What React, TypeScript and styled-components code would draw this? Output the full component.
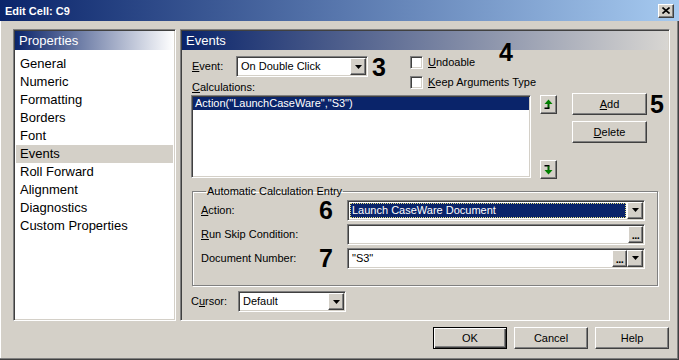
import React from 'react'
import styled, { createGlobalStyle } from 'styled-components'

const colors = {
  face: '#d4d0c8',
  shadow: '#808080',
  dark: '#404040',
  white: '#ffffff',
  navy: '#0a246a',
  text: '#000000',
}

const GlobalStyle = createGlobalStyle`
  html, body {
    margin: 0;
    padding: 0;
    background: ${colors.face};
  }
  body {
    font-family: 'Liberation Sans', Arial, sans-serif;
    font-size: 11px;
    color: ${colors.text};
  }
  * {
    box-sizing: border-box;
  }
`

const Window = styled.div`
  width: 679px;
  height: 360px;
  display: flex;
  flex-direction: column;
  background: ${colors.face};
  box-shadow: inset -1px -1px ${colors.dark}, inset -2px -2px ${colors.shadow},
    inset 1px 0 ${colors.white};
  overflow: hidden;
`

const TitleBar = styled.div`
  height: 21px;
  flex: none;
  display: flex;
  align-items: center;
  justify-content: space-between;
  padding: 0 5px;
  background: linear-gradient(to right, ${colors.navy}, #a6caf0);
`

const Title = styled.span`
  font-weight: bold;
  font-size: 11px;
  color: ${colors.white};
`

const raised = `
  background: ${colors.face};
  border: 1px solid;
  border-color: ${colors.white} ${colors.dark} ${colors.dark} ${colors.white};
  box-shadow: inset -1px -1px ${colors.shadow};
`

const sunken = `
  border: 1px solid;
  border-color: ${colors.shadow} ${colors.white} ${colors.white} ${colors.shadow};
  box-shadow: inset 1px 1px ${colors.dark}, inset -1px -1px ${colors.face};
  padding: 1px;
`

const CloseButton = styled.div`
  ${raised}
  width: 16px;
  height: 14px;
  display: flex;
  align-items: center;
  justify-content: center;
`

const Body = styled.div`
  flex: 1;
  display: flex;
  flex-direction: column;
  padding: 8px 9px 0 13px;
`

const MainRow = styled.div`
  display: flex;
  gap: 4px;
  height: 292px;
`

const Panel = styled.div<{ $width: number; $fill: string }>`
  ${sunken}
  width: ${(p) => p.$width}px;
  height: 100%;
  background: ${(p) => p.$fill};
  display: flex;
  flex-direction: column;
`

const PanelHeader = styled.div<{ $end: string }>`
  height: 19px;
  flex: none;
  line-height: 19px;
  padding-left: 4px;
  font-size: 13px;
  color: ${colors.white};
  background: linear-gradient(to right, ${colors.navy}, ${(p) => p.$end});
`

const NavList = styled.ul`
  list-style: none;
  margin: 5px 0 0;
  padding: 0;
`

const NavItem = styled.li<{ $active?: boolean }>`
  height: 18px;
  line-height: 18px;
  margin: 0 1px;
  padding-left: 4px;
  font-size: 13px;
  background: ${(p) => (p.$active ? colors.face : 'transparent')};
`

const Content = styled.div`
  position: relative;
  flex: 1;
  padding: 5px 0 0 9px;
`

const TopArea = styled.div`
  display: flex;
  height: 40px;
`

const TopLeft = styled.div`
  width: 219px;
`

const Row = styled.div`
  display: flex;
  align-items: center;
`

const EventRow = styled(Row)`
  margin-top: 1px;
  height: 21px;
`

const Label = styled.span<{ $width?: number }>`
  display: inline-block;
  width: ${(p) => (p.$width ? `${p.$width}px` : 'auto')};
  flex: none;
  line-height: 13px;
  white-space: nowrap;
`

const CalcLabel = styled.div`
  margin-top: 4px;
  padding-left: 1px;
  line-height: 13px;
`

const CheckColumn = styled.div`
  display: flex;
  flex-direction: column;
  gap: 7px;
  padding-top: 1px;
`

const CheckRow = styled.label`
  display: flex;
  align-items: center;
  gap: 5px;
  height: 13px;
  line-height: 13px;
`

const CheckBox = styled.span`
  ${sunken}
  width: 13px;
  height: 13px;
  background: ${colors.white};
`

const Marker = styled.span<{ $gap?: number }>`
  font-weight: bold;
  font-size: 25px;
  line-height: 22px;
  margin-left: ${(p) => p.$gap ?? 0}px;
`

const FloatingMarker = styled(Marker)`
  position: absolute;
  left: 317px;
  top: -9px;
`

const ListRow = styled.div`
  display: flex;
  align-items: flex-start;
  height: 84px;
`

const ListBox = styled.div`
  ${sunken}
  width: 340px;
  height: 83px;
  background: ${colors.white};
`

const ListEntry = styled.div<{ $selected?: boolean }>`
  height: 13px;
  line-height: 13px;
  padding-left: 2px;
  white-space: nowrap;
  color: ${(p) => (p.$selected ? colors.white : colors.text)};
  background: ${(p) => (p.$selected ? colors.navy : 'transparent')};
`

const ArrowColumn = styled.div`
  margin-left: 9px;
  height: 84px;
  display: flex;
  flex-direction: column;
  justify-content: space-between;
`

const IconButton = styled.div`
  ${raised}
  width: 17px;
  height: 19px;
  display: flex;
  align-items: center;
  justify-content: center;
`

const ButtonColumn = styled.div`
  margin-left: 15px;
  margin-top: -2px;
  display: flex;
  flex-direction: column;
  gap: 6px;
`

const PushButton = styled.div<{ $default?: boolean }>`
  ${raised}
  width: 75px;
  height: 22px;
  display: flex;
  align-items: center;
  justify-content: center;
  ${(p) =>
    p.$default
      ? `
    border: 1px solid ${colors.text};
    box-shadow: inset 1px 1px ${colors.white}, inset -1px -1px ${colors.dark},
      inset -2px -2px ${colors.shadow};
  `
      : ''}
`

const GroupBox = styled.fieldset`
  margin: 6px 0 0 1px;
  width: 466px;
  height: 101px;
  padding: 0 12px 0 8px;
  border: 1px solid ${colors.shadow};
  box-shadow: inset 1px 1px ${colors.white}, 1px 1px ${colors.white};
`

const Legend = styled.legend`
  margin-left: 5px;
  padding: 0 1px;
  line-height: 13px;
`

const GroupRows = styled.div`
  margin-top: 1px;
  display: flex;
  flex-direction: column;
  gap: 2px;
`

const GroupRow = styled.div`
  display: flex;
  align-items: center;
  height: 22px;
`

const GroupLabel = styled.div`
  width: 146px;
  flex: none;
  display: flex;
  align-items: center;
  justify-content: space-between;
  padding-right: 14px;
`

const Field = styled.div<{ $width: number; $height?: number }>`
  ${sunken}
  width: ${(p) => p.$width}px;
  height: ${(p) => p.$height ?? 21}px;
  flex: none;
  display: flex;
  background: ${colors.white};
`

const FieldText = styled.div<{ $selected?: boolean }>`
  flex: 1;
  padding-left: 2px;
  line-height: 15px;
  white-space: nowrap;
  overflow: hidden;
  color: ${(p) => (p.$selected ? colors.white : colors.text)};
  background: ${(p) => (p.$selected ? colors.navy : 'transparent')};
  outline: ${(p) => (p.$selected ? '1px dotted #e8e080' : 'none')};
  outline-offset: -1px;
  margin: 1px;
`

const DropButton = styled.div<{ $narrow?: boolean }>`
  ${raised}
  width: ${(p) => (p.$narrow ? 15 : 16)}px;
  height: 100%;
  flex: none;
  display: flex;
  align-items: center;
  justify-content: center;
`

const Ellipsis = styled(DropButton)`
  align-items: flex-end;
  font-weight: bold;
  font-size: 11px;
  line-height: 10px;
  padding-bottom: 2px;
  letter-spacing: -0.5px;
`

const CursorRow = styled(Row)`
  margin-top: 5px;
  height: 21px;
`

const Footer = styled.div`
  display: flex;
  justify-content: flex-end;
  gap: 7px;
  padding-top: 6px;
  margin-right: 1px;
`

const FooterButton = styled(PushButton)`
  width: 74px;
`

const Key = styled.span`
  text-decoration: underline;
`

const DownTriangle = () => (
  <svg width="7" height="4" viewBox="0 0 7 4">
    <polygon points="0,0 7,0 3.5,4" fill="#000" />
  </svg>
)

const CloseGlyph = () => (
  <svg width="8" height="7" viewBox="0 0 8 7">
    <path d="M0.5 0.5 L7.5 6.5 M7.5 0.5 L0.5 6.5" stroke="#000" strokeWidth="1.6" />
  </svg>
)

const ArrowUp = () => (
  <svg width="9" height="11" viewBox="0 0 9 11">
    <polygon points="4.5,0.5 0.5,5 8.5,5" fill="#008000" />
    <rect x="3.5" y="5" width="2" height="4" fill="#006000" />
    <rect x="0.5" y="8.5" width="5" height="1.5" fill="#000" />
  </svg>
)

const ArrowDown = () => (
  <svg width="9" height="11" viewBox="0 0 9 11">
    <rect x="0.5" y="1" width="5" height="1.5" fill="#000" />
    <rect x="3.5" y="2" width="2" height="4" fill="#006000" />
    <polygon points="4.5,10.5 0.5,6 8.5,6" fill="#008000" />
  </svg>
)

interface ComboProps {
  width: number
  value: string
  selected?: boolean
}

const Combo = ({ width, value, selected }: ComboProps) => (
  <Field $width={width}>
    <FieldText $selected={selected}>{value}</FieldText>
    <DropButton>
      <DownTriangle />
    </DropButton>
  </Field>
)

const navItems = [
  'General',
  'Numeric',
  'Formatting',
  'Borders',
  'Font',
  'Events',
  'Roll Forward',
  'Alignment',
  'Diagnostics',
  'Custom Properties',
]

export default function App() {
  return (
    <>
      <GlobalStyle />
      <Window>
        <TitleBar>
          <Title>Edit Cell: C9</Title>
          <CloseButton>
            <CloseGlyph />
          </CloseButton>
        </TitleBar>
        <Body>
          <MainRow>
            <Panel $width={163} $fill={colors.white}>
              <PanelHeader $end={colors.white}>Properties</PanelHeader>
              <NavList>
                {navItems.map((item) => (
                  <NavItem key={item} $active={item === 'Events'}>
                    {item}
                  </NavItem>
                ))}
              </NavList>
            </Panel>
            <Panel $width={490} $fill={colors.face}>
              <PanelHeader $end="#d8d6d2">Events</PanelHeader>
              <Content>
                <FloatingMarker>4</FloatingMarker>
                <TopArea>
                  <TopLeft>
                    <EventRow>
                      <Label $width={45} style={{ paddingLeft: 1 }}>
                        <Key>E</Key>vent:
                      </Label>
                      <Combo width={132} value="On Double Click" />
                      <Marker $gap={4}>3</Marker>
                    </EventRow>
                    <CalcLabel>
                      <Key>C</Key>alculations:
                    </CalcLabel>
                  </TopLeft>
                  <CheckColumn>
                    <CheckRow>
                      <CheckBox />
                      <span>
                        <Key>U</Key>ndoable
                      </span>
                    </CheckRow>
                    <CheckRow>
                      <CheckBox />
                      <span>
                        <Key>K</Key>eep Arguments Type
                      </span>
                    </CheckRow>
                  </CheckColumn>
                </TopArea>
                <ListRow>
                  <ListBox>
                    <ListEntry $selected>Action("LaunchCaseWare","S3")</ListEntry>
                  </ListBox>
                  <ArrowColumn>
                    <IconButton>
                      <ArrowUp />
                    </IconButton>
                    <IconButton>
                      <ArrowDown />
                    </IconButton>
                  </ArrowColumn>
                  <ButtonColumn>
                    <Row>
                      <PushButton>
                        <span>
                          <Key>A</Key>dd
                        </span>
                      </PushButton>
                      <Marker $gap={3}>5</Marker>
                    </Row>
                    <PushButton>
                      <span>
                        <Key>D</Key>elete
                      </span>
                    </PushButton>
                  </ButtonColumn>
                </ListRow>
                <GroupBox>
                  <Legend>Automatic Calculation Entry</Legend>
                  <GroupRows>
                    <GroupRow>
                      <GroupLabel>
                        <Label>
                          <Key>A</Key>ction:
                        </Label>
                        <Marker>6</Marker>
                      </GroupLabel>
                      <Combo width={298} value="Launch CaseWare Document" selected />
                    </GroupRow>
                    <GroupRow>
                      <GroupLabel>
                        <Label>
                          <Key>R</Key>un Skip Condition:
                        </Label>
                      </GroupLabel>
                      <Field $width={298}>
                        <FieldText />
                        <Ellipsis $narrow>...</Ellipsis>
                      </Field>
                    </GroupRow>
                    <GroupRow>
                      <GroupLabel>
                        <Label>Document Number:</Label>
                        <Marker>7</Marker>
                      </GroupLabel>
                      <Field $width={298}>
                        <FieldText>"S3"</FieldText>
                        <Ellipsis $narrow>...</Ellipsis>
                        <DropButton>
                          <DownTriangle />
                        </DropButton>
                      </Field>
                    </GroupRow>
                  </GroupRows>
                </GroupBox>
                <CursorRow>
                  <Label $width={47}>
                    C<Key>u</Key>rsor:
                  </Label>
                  <Combo width={108} value="Default" />
                </CursorRow>
              </Content>
            </Panel>
          </MainRow>
          <Footer>
            <FooterButton $default>OK</FooterButton>
            <FooterButton>Cancel</FooterButton>
            <FooterButton>Help</FooterButton>
          </Footer>
        </Body>
      </Window>
    </>
  )
}
